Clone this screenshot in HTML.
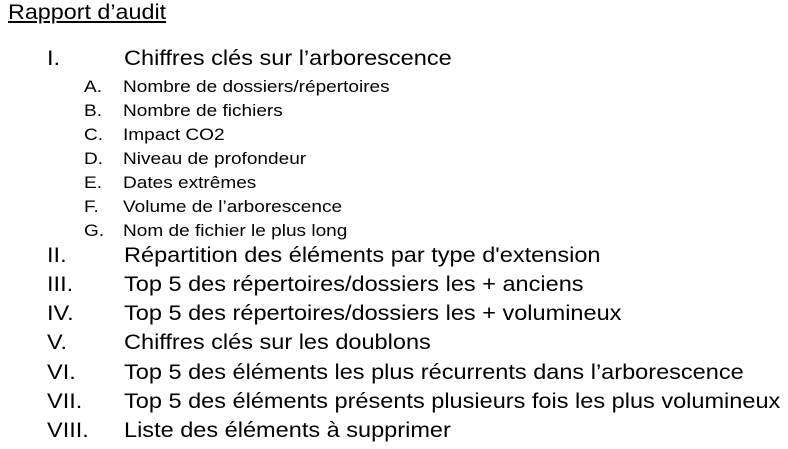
<!DOCTYPE html>
<html><head><meta charset="utf-8"><style>
body{margin:0;width:788px;height:449px;background:#fff;position:relative;overflow:hidden;font-family:"Liberation Sans",Arial,sans-serif;color:#000}
div{position:absolute;white-space:nowrap;transform-origin:0 50%}
.t{left:8px;top:1px;font-size:21px;line-height:24px;text-decoration:underline;transform:scaleX(1.11)}
.m{font-size:21px;line-height:24px;transform:scaleX(1.12)}
.s{font-size:17px;line-height:20px;transform:scaleX(1.12)}
</style></head><body>
<div class="t">Rapport d’audit</div>

<div class="m" style="left:47px;top:47px">I.</div><div class="m" style="left:124px;top:47px">Chiffres clés sur l’arborescence</div>

<div class="s" style="left:84px;top:77px">A.</div><div class="s" style="left:123px;top:77px">Nombre de dossiers/répertoires</div>
<div class="s" style="left:84px;top:101px">B.</div><div class="s" style="left:123px;top:101px">Nombre de fichiers</div>
<div class="s" style="left:84px;top:125px">C.</div><div class="s" style="left:123px;top:125px">Impact CO2</div>
<div class="s" style="left:84px;top:149px">D.</div><div class="s" style="left:123px;top:149px">Niveau de profondeur</div>
<div class="s" style="left:84px;top:173px">E.</div><div class="s" style="left:123px;top:173px">Dates extrêmes</div>
<div class="s" style="left:84px;top:197px">F.</div><div class="s" style="left:123px;top:197px">Volume de l’arborescence</div>
<div class="s" style="left:84px;top:221px">G.</div><div class="s" style="left:123px;top:221px">Nom de fichier le plus long</div>

<div class="m" style="left:47px;top:244px">II.</div><div class="m" style="left:124px;top:244px">Répartition des éléments par type d'extension</div>
<div class="m" style="left:47px;top:273px">III.</div><div class="m" style="left:124px;top:273px">Top 5 des répertoires/dossiers les + anciens</div>
<div class="m" style="left:47px;top:302px">IV.</div><div class="m" style="left:124px;top:302px">Top 5 des répertoires/dossiers les + volumineux</div>
<div class="m" style="left:47px;top:331px">V.</div><div class="m" style="left:124px;top:331px">Chiffres clés sur les doublons</div>
<div class="m" style="left:47px;top:361px">VI.</div><div class="m" style="left:124px;top:361px">Top 5 des éléments les plus récurrents dans l’arborescence</div>
<div class="m" style="left:47px;top:390px">VII.</div><div class="m" style="left:124px;top:390px">Top 5 des éléments présents plusieurs fois les plus volumineux</div>
<div class="m" style="left:47px;top:419px">VIII.</div><div class="m" style="left:124px;top:419px">Liste des éléments à supprimer</div>
</body></html>
